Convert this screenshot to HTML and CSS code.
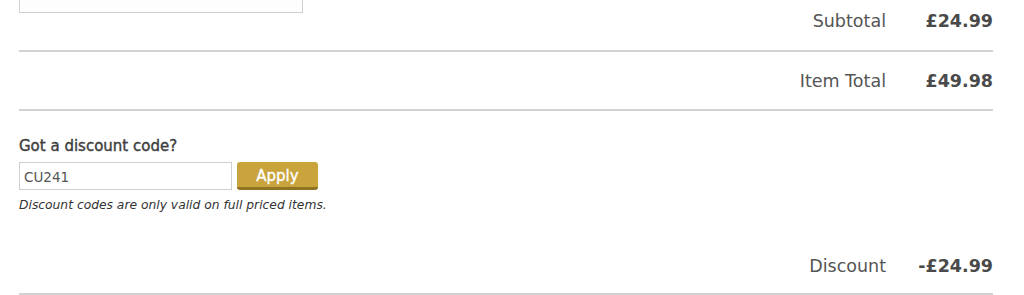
FILE: index.html
```html
<!DOCTYPE html>
<html lang="en">
<head>
<meta charset="utf-8">
<title>Basket totals</title>
<link rel="stylesheet" href="styles.css">
</head>
<body>
<div class="basket">
  <div class="row row-top">
    <div class="note-box"></div>
    <div class="totals">
      <span class="label">Subtotal</span>
      <span class="value">£24.99</span>
    </div>
  </div>
  <div class="row row-item">
    <div class="totals">
      <span class="label">Item Total</span>
      <span class="value">£49.98</span>
    </div>
  </div>
  <div class="discount-section">
    <h3 class="discount-title">Got a discount code?</h3>
    <form class="discount-form">
      <input class="discount-input" type="text" value="CU241">
      <button class="apply-btn" type="button">Apply</button>
    </form>
    <p class="discount-note">Discount codes are only valid on full priced items.</p>
    <div class="totals totals-discount">
      <span class="label">Discount</span>
      <span class="value">-£24.99</span>
    </div>
  </div>
</div>
</body>
</html>
```
FILE: styles.css
```css
* { box-sizing: border-box; }
html, body { margin: 0; padding: 0; background: #fff; }
body {
  font-family: "DejaVu Sans", Verdana, sans-serif;
  color: #444;
}
.basket {
  padding: 0 31px 0 19px;
}
.row {
  display: flex;
  align-items: center;
  border-bottom: 2px solid #d2d2d2;
}
.row-top {
  height: 52px;
  justify-content: space-between;
  align-items: flex-start;
}
.note-box {
  width: 284px;
  height: 13px;
  border: 1px solid #d0d0d0;
  border-top: none;
  background: #fdfdfd;
}
.row-top .totals { margin-top: 10px; }
.row-item {
  height: 59px;
  justify-content: flex-end;
}
.totals {
  display: flex;
  align-items: baseline;
  justify-content: flex-end;
  font-size: 17.5px;
  line-height: 22px;
}
.label {
  color: #555;
}
.value {
  width: 107px;
  text-align: right;
  font-weight: bold;
  color: #4a4a4a;
}
.discount-section {
  padding-top: 26px;
  padding-bottom: 16px;
  border-bottom: 2px solid #d2d2d2;
}
.discount-title {
  margin: 0 0 7px;
  font-size: 15px;
  line-height: 18px;
  font-weight: normal;
  color: #3e3e3e;
  -webkit-text-stroke: 0.4px #3e3e3e;
}
.discount-form {
  display: flex;
  align-items: flex-start;
  gap: 5px;
  margin: 0;
}
.discount-input {
  width: 213px;
  height: 28px;
  border: 1px solid #cfcfcf;
  padding: 1px 4px 0;
  font-family: "DejaVu Sans", Verdana, sans-serif;
  font-size: 13.5px;
  color: #555;
}
.apply-btn {
  width: 81px;
  height: 28px;
  border: none;
  border-bottom: 3px solid #8e7424;
  border-radius: 3px;
  background: #c9a43c;
  color: #fff;
  font-family: "DejaVu Sans", Verdana, sans-serif;
  font-size: 15px;
  font-weight: normal;
  -webkit-text-stroke: 0.35px #fff;
  padding: 2px 0 0;
}
.discount-note {
  margin: 8px 0 0;
  font-size: 12.3px;
  line-height: 15px;
  font-style: italic;
  color: #333;
}
.totals-discount {
  margin-top: 42px;
}
```
